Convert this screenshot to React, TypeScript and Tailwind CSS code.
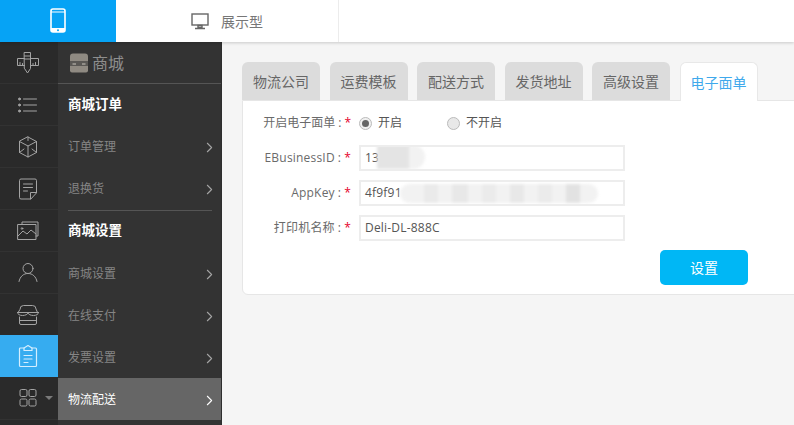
import React from "react";
import { ChevronRight } from "lucide-react";

const I = ({ children }: { children: React.ReactNode }) => (
  <svg width="24" height="24" viewBox="0 0 24 24" fill="none" stroke="#a4a4a4" strokeWidth="1" strokeLinecap="round" strokeLinejoin="round">
    {children}
  </svg>
);

const rail: React.ReactNode[] = [
  <I key="a"><path d="M8.500 1.500h6v16l-3 4.500-3-4.500z" /><path d="M8.500 5h6M8.500 8h6" /><path d="M8.500 7.500H1.500v7h7M14.500 7.500h8v7h-8M4 14.500v-3M6.500 14.500v-2M17 14.500v-2M19.500 14.500v-3" /></I>,
  <I key="b"><path d="M7.500 6h13M7.500 12h13M7.500 18h13" /><circle cx="3.500" cy="6" r="1" fill="#a4a4a4" /><circle cx="3.500" cy="12" r="1" fill="#a4a4a4" /><circle cx="3.500" cy="18" r="1" fill="#a4a4a4" /></I>,
  <I key="c"><path d="M12 2l8.500 4.500v11L12 22l-8.500-4.500v-11z" /><path d="M3.500 6.500L12 11l8.500-4.500M12 11v11M12 2v3.500M3.500 17.500L8 14M20.500 17.500L16 14" /></I>,
  <I key="d"><path d="M20.500 15.500V3.500a1.500 1.500 0 0 0-1.500-1.500H5a1.500 1.500 0 0 0-1.500 1.500v17A1.500 1.500 0 0 0 5 22h9.500z" /><path d="M14.500 22v-6.500h6M7.500 7h9M7.500 10.500h9M7.500 14h4" /></I>,
  <I key="e"><path d="M6 5.500V3h16v14h-2" /><rect x="2" y="5.500" width="18" height="15" /><path d="M2 17l5-5 4 3 4-4 5 4" /><circle cx="6" cy="9.500" r=".8" /></I>,
  <I key="f"><circle cx="12" cy="7.500" r="5" /><path d="M3 20.500c1-5 4.500-8 9-8s8 3 9 8" /></I>,
  <I key="g"><path d="M4 6a3.500 3.500 0 0 1 3.500-3.500h9A3.500 3.500 0 0 1 20 6l1.500 3.500H2.500z" /><path d="M1.500 9.500h21M1.500 9.500c0 2 2.500 3 5 3 2.500 0 5.500-1 5.500-3 0 2 3 3 5.500 3 2.500 0 5-1 5-3" /><path d="M3.500 14v6a1.500 1.500 0 0 0 1.500 1.500h14a1.500 1.500 0 0 0 1.500-1.500v-6M3.500 17.500h17" /></I>,
];

const Row = ({ label, active, low }: { label: string; active?: boolean; low?: boolean }) => (
  <div className={`h-[42px] shrink-0 flex items-center justify-between pl-[10px] pr-[3.500px] text-[12px] ${low ? "pt-[2px]" : ""} ${active ? "bg-[#666666] text-white" : "text-[#858585]"}`}>
    <span>{label}</span>
    <ChevronRight size={17} color={active ? "#ffffff" : "#a5a5a5"} strokeWidth={1.500} />
  </div>
);

const Head = ({ label, short }: { label: string; short?: boolean }) => (
  <div className={`${short ? "h-[41px]" : "h-[42px]"} shrink-0 flex items-center pl-[10px] pb-[2px] text-[13.500px] font-bold text-white`}>{label}</div>
);

const Colon = () => (
  <>
    <span className="mx-[3px]">:</span>
    <span className="text-[#e4002b]">*</span>
  </>
);

const Field = ({ label, value, blur }: { label: string; value: string; blur?: React.ReactNode }) => (
  <div className="flex items-center h-[26px] mb-[9px]">
    <div className="w-[108px] text-right text-[12px] text-[#6a6a6a] tracking-[0.2px]">
      {label}
      <Colon />
    </div>
    <div className="relative ml-[8px] w-[266px] h-[26px] border-2 border-[#ededed] bg-white pl-[4px] flex items-center text-[12px] tracking-[0.2px] text-[#555555] overflow-hidden">
      {value}
      {blur}
    </div>
  </div>
);

const tabs = ["物流公司", "运费模板", "配送方式", "发货地址", "高级设置"];

export default function App() {
  return (
    <div className="w-[794px] h-[425px] overflow-hidden bg-[#f5f5f5] flex flex-col font-['Open_Sans','Noto_Sans_CJK_SC',sans-serif]">
      <header className="h-[42px] shrink-0 bg-white flex shadow-[0_1px_3px_rgba(0,0,0,0.18)] relative z-10">
        <div className="w-[116px] bg-[#06a3f5] flex items-center justify-center">
          <svg width="16" height="26" viewBox="0 0 16 26" fill="none">
            <rect x="1" y="1" width="14" height="23" rx="2" stroke="#fff" strokeWidth="1.600" />
            <path d="M1 4h14M1 20.500h14" stroke="#fff" strokeWidth="1.200" />
            <rect x="1" y="20.500" width="14" height="3.500" fill="#fff" />
            <circle cx="8" cy="22.300" r="1" fill="#06a3f5" />
          </svg>
        </div>
        <div className="w-[223px] border-r border-[#ececec] flex items-center pl-[75px] gap-[12px] text-[14px] text-[#777777]">
          <svg width="18" height="17" viewBox="0 0 18 17" fill="none">
            <rect x="1" y="1" width="16" height="11" stroke="#666" strokeWidth="1.400" />
            <path d="M7 12.500h4v2H7z M4 15.500h10" stroke="#666" strokeWidth="1.400" />
          </svg>
          <span>展示型</span>
        </div>
      </header>
      <div className="flex flex-1 min-h-0">
        <aside className="w-[58px] bg-[#2a2a2a] flex flex-col shrink-0">
          {rail.map((ic, i) => (
            <div key={i} className="h-[42px] shrink-0 flex items-center justify-center pr-[2px] border-b border-[#323232]">{ic}</div>
          ))}
          <div className="h-[42px] -mt-px shrink-0 bg-[#36acf0] flex items-center justify-center pr-[2px]">
            <svg width="20" height="24" viewBox="0 0 20 24" fill="none" stroke="#d4eeff" strokeWidth="1.200" strokeLinejoin="round" strokeLinecap="round">
              <path d="M6 4H2.500a1 1 0 0 0-1 1v16.500a1 1 0 0 0 1 1h15a1 1 0 0 0 1-1V5a1 1 0 0 0-1-1H14" />
              <path d="M6 6.500V4l4-2.500L14 4v2.500zM6 11.500h8M6 15h8M6 18.500h4" />
            </svg>
          </div>
          <div className="h-[43px] shrink-0 flex items-center pl-[17px] gap-[6px] border-b border-[#323232]">
            <svg width="22" height="22" viewBox="0 0 22 22" fill="none" stroke="#a4a4a4" strokeWidth="1">
              <rect x="3" y="2.500" width="7" height="7" rx="1.500" />
              <rect x="12" y="2.500" width="7" height="7" rx="1.500" />
              <rect x="3" y="12" width="7" height="7" rx="1.500" />
              <rect x="12" y="12" width="7" height="7" rx="1.500" />
            </svg>
            <div className="w-0 h-0 border-x-[4px] border-x-transparent border-t-[4px] border-t-[#7a7a7a]" />
          </div>
        </aside>
        <nav className="w-[164px] shrink-0 bg-[#333333] border-r border-[#2e2e2e] flex flex-col">
          <div className="h-[42px] shrink-0 border-b border-[#555555] flex items-center pl-[11px] gap-[3px] text-[16px] text-[#8e8e8e]">
            <svg width="20" height="20" viewBox="0 0 20 20">
              <path d="M4 .5h12a3 3 0 0 1 3 3V8H1V3.500a3 3 0 0 1 3-3z" fill="#8f8a82" />
              <path d="M1 13h18v4.500a2 2 0 0 1-2 2H3a2 2 0 0 1-2-2z" fill="#8f8a82" />
              <path d="M1 8h18v5H1z" fill="#5a5855" />
              <path d="M3.500 11h3.500M13 11h3.500" stroke="#c9c5bd" strokeWidth="1" />
            </svg>
            <span>商城</span>
          </div>
          <Head label="商城订单" />
          <Row label="订单管理" />
          <Row label="退换货" />
          <div className="h-px ml-[10px] mr-[9px] bg-[#555555] shrink-0" />
          <Head label="商城设置" short />
          <Row label="商城设置" low />
          <Row label="在线支付" low />
          <Row label="发票设置" low />
          <Row label="物流配送" active low />
        </nav>
        <main className="flex-1 min-w-0 pt-[20px] pl-[20px]">
          <div className="flex gap-[9.500px] relative z-10 h-[39px]">
            {tabs.map((t) => (
              <div key={t} className="w-[78px] h-[38px] rounded-t-[6px] bg-[#dcdcdc] flex items-center justify-center text-[14px] text-[#666666]">{t}</div>
            ))}
            <div className="w-[78px] h-[39px] rounded-t-[6px] bg-white border border-b-0 border-[#e8e8e8] flex items-center justify-center text-[14px] text-[#3fa9ec]">电子面单</div>
          </div>
          <div className="w-[560px] h-[195px] -mt-px bg-white border border-[#e6e6e6] rounded-bl-[6px] pt-[10px]">
            <div className="flex items-center h-[24px] mb-[10px]">
              <div className="w-[108px] text-right text-[12px] text-[#6a6a6a]">
                开启电子面单
                <Colon />
              </div>
              <div className="ml-[8px] flex items-center text-[12px] text-[#555555]">
                <span className="w-[13px] h-[13px] rounded-full border border-[#bbbbbb] bg-[#f0f0f0] flex items-center justify-center mr-[6px]">
                  <span className="w-[7px] h-[7px] rounded-full bg-[#666666]" />
                </span>
                <span className="w-[69px]">开启</span>
                <span className="w-[13px] h-[13px] rounded-full border border-[#bbbbbb] bg-[#e8e8e8] mr-[6px]" />
                <span>不开启</span>
              </div>
            </div>
            <Field
              label="EBusinessID"
              value="13"
              blur={
                <div className="absolute left-[16px] top-[-2px] w-[48px] h-[24px] rounded-r-[12px] bg-[#f2f2f2] blur-[1.500px] overflow-hidden">
                  <div className="w-[32px] h-full bg-[#e4e4e4]" />
                </div>
              }
            />
            <Field
              label="AppKey"
              value="4f9f91"
              blur={
                <div className="absolute left-[39px] top-[2px] w-[198px] h-[19px] rounded-[10px] bg-[#f2f2f2] blur-[1.500px] flex gap-[14px] pl-[24px] overflow-hidden">
                  <div className="w-[14px] h-full bg-[#eaeaea]" />
                  <div className="w-[16px] h-full bg-[#e8e8e8]" />
                  <div className="w-[14px] h-full bg-[#ebebeb]" />
                  <div className="w-[14px] h-full bg-[#e8e8e8]" />
                  <div className="w-[14px] h-full bg-[#ebebeb]" />
                  <div className="w-[14px] h-full bg-[#e2e2e2]" />
                </div>
              }
            />
            <Field label="打印机名称" value="Deli-DL-888C" />
            <div className="flex">
              <button className="ml-[417px] w-[88px] h-[35px] rounded-[5px] bg-[#00b7f5] text-white text-[14px]">设置</button>
            </div>
          </div>
        </main>
      </div>
    </div>
  );
}
